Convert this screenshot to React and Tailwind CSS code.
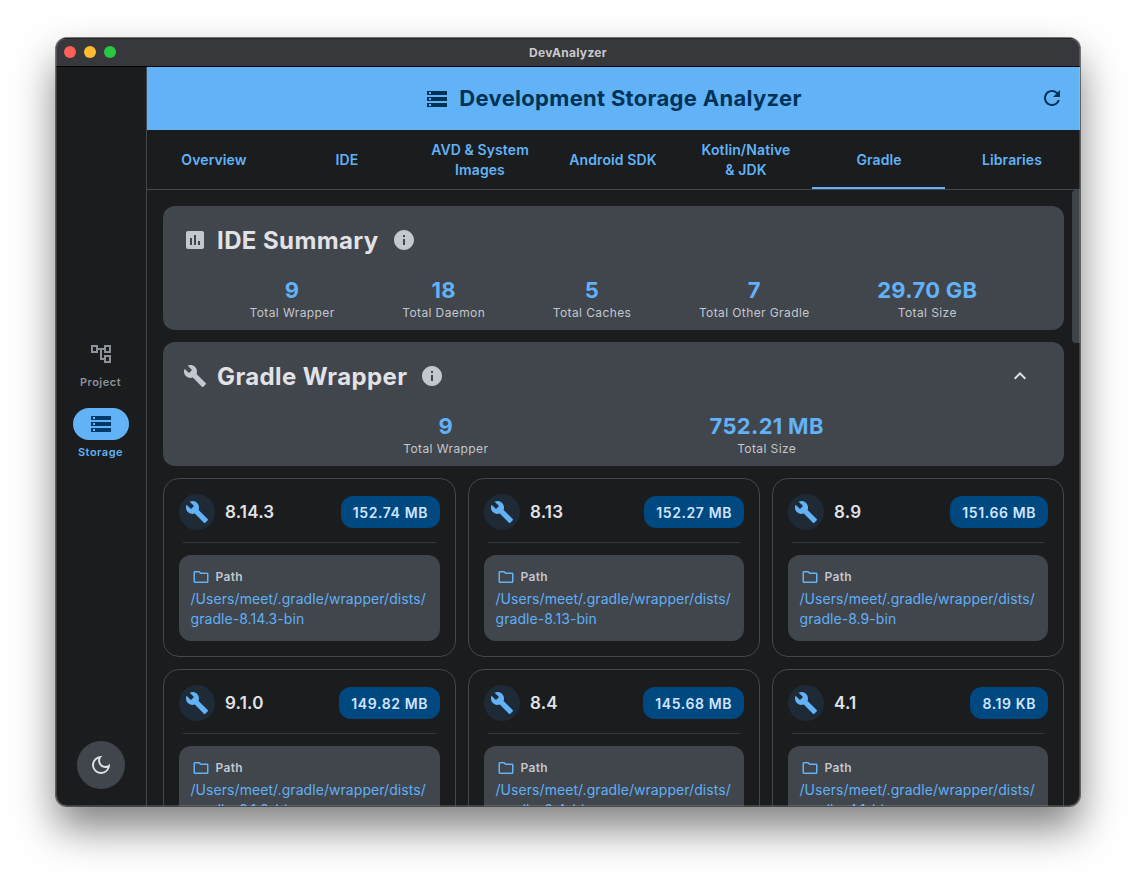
import React from "react";
import { MdStorage, MdRefresh, MdBuild, MdAssessment, MdInfo, MdOutlineFolder, MdOutlineDarkMode, MdKeyboardArrowUp, MdOutlineAccountTree } from "react-icons/md";

const tabs = ["Overview", "IDE", "AVD & System\nImages", "Android SDK", "Kotlin/Native\n& JDK", "Gradle", "Libraries"];
const cards = [
  ["8.14.3", "152.74 MB"],
  ["8.13", "152.27 MB"],
  ["8.9", "151.66 MB"],
  ["9.1.0", "149.82 MB"],
  ["8.4", "145.68 MB"],
  ["4.1", "8.19 KB"],
];

function Stat({ value, label }) {
  return (
    <div className="flex flex-col items-center">
      <div className="text-[22px] leading-[28px] font-bold tracking-[0.3px] text-[#61b2f6]">{value}</div>
      <div className="mt-[1px] text-[12px] leading-[16px] tracking-[0.4px] text-[#c3c7cf]">{label}</div>
    </div>
  );
}

function Section({ icon, title, stats, chevron }) {
  return (
    <section className="relative h-[124px] shrink-0 rounded-[12px] bg-[#41454c] px-4 pt-4">
      <div className="flex h-[36px] items-center">
        <div className="flex w-[38px] items-center pl-[4px] text-[#c3c7cf]">{icon}</div>
        <h2 className="pt-[2px] text-[24px] leading-[32px] font-bold tracking-[0.4px] text-[#e2e2e6]">{title}</h2>
        <MdInfo className="ml-[13px] text-[#c3c7cf]" size={24} />
        {chevron && <MdKeyboardArrowUp className="ml-auto mr-[16px] text-[#e2e2e6]" size={24} />}
      </div>
      <div className="mt-[18px] flex justify-evenly px-[3px]">
        {stats.map(([v, l]) => (
          <Stat key={l} value={v} label={l} />
        ))}
      </div>
    </section>
  );
}

function Card({ version, size }) {
  return (
    <article className="h-[179px] rounded-[16px] border border-[#43474e] bg-[#1a1c1e] px-[15px] pt-[15px]">
      <div className="flex h-[36px] items-center">
        <div className="flex h-[36px] w-[36px] items-center justify-center rounded-full bg-[#1e2a35] text-[#61b2f6]">
          <MdBuild size={24} />
        </div>
        <span className="ml-[10px] text-[17px] leading-[24px] font-semibold tracking-[0.2px] text-[#e2e2e6]">{version}</span>
        <span className="ml-auto flex h-[32px] items-center rounded-[12px] bg-[#004880] px-3 text-[14px] font-semibold tracking-[0.6px] text-[#d1e4ff]">
          {size}
        </span>
      </div>
      <div className="mx-[4px] mt-[12px] h-px bg-[#33363b]" />
      <div className="mt-[12px] h-[86px] rounded-[12px] bg-[#41454c] px-[11.5px] pt-[13px]">
        <div className="flex h-[18px] items-center gap-[6px] pl-[1px]">
          <MdOutlineFolder className="text-[#61b2f6]" size={18} />
          <span className="text-[12px] font-semibold tracking-[0.3px] text-[#c3c7cf]">Path</span>
        </div>
        <div className="mt-[3px] text-[14px] leading-[20px] tracking-[0.06px] text-[#5fb0f5]">
          /Users/meet/.gradle/wrapper/dists/
          <br />
          gradle-{version}-bin
        </div>
      </div>
    </article>
  );
}

export default function App() {
  return (
    <div className="h-[880px] w-[1136px] overflow-hidden bg-white pl-[56px] pt-[38px] font-['Inter',sans-serif] [font-optical-sizing:none]">
      <div className="relative h-[768px] w-[1024px] rounded-[11px] shadow-[0_0_0_1px_rgba(0,0,0,0.5),0_22px_42px_rgba(0,0,0,0.5)]">
        <div className="flex h-full w-full flex-col overflow-hidden rounded-[11px] bg-[#1a1c1e]">
          <div className="relative flex h-[29px] shrink-0 items-center justify-center border-y border-y-black bg-[#37383c]">
            <div className="absolute left-[8px] top-[7px] flex gap-[8px]">
              <span className="h-[12px] w-[12px] rounded-full bg-[#ff5f57]" />
              <span className="h-[12px] w-[12px] rounded-full bg-[#febc2e]" />
              <span className="h-[12px] w-[12px] rounded-full bg-[#28c840]" />
            </div>
            <span className="text-[12px] font-bold tracking-[0.3px] text-[#c9c9cb]">DevAnalyzer</span>
          </div>

          <div className="flex min-h-0 flex-1">
            <aside className="flex w-[91px] shrink-0 flex-col items-center border-r border-[#43474e] pr-[1px]">
              <div className="flex flex-1 flex-col items-center justify-center gap-[18px] pb-[2px]">
                <div className="flex flex-col items-center">
                  <div className="flex h-[32px] w-[56px] items-center justify-center text-[#8d9199]">
                    <MdOutlineAccountTree size={24} />
                  </div>
                  <span className="mt-[4px] text-[11px] leading-[16px] font-semibold tracking-[0.5px] text-[#8d9199]">Project</span>
                </div>
                <div className="flex flex-col items-center">
                  <div className="flex h-[32px] w-[56px] items-center justify-center rounded-full bg-[#61b2f6] text-[#003a6b]">
                    <MdStorage size={24} />
                  </div>
                  <span className="mt-[4px] text-[11px] leading-[16px] font-semibold tracking-[0.5px] text-[#61b2f6]">Storage</span>
                </div>
              </div>
              <div className="mb-[17px] mt-[8px] flex h-[48px] w-[48px] items-center justify-center rounded-full bg-[#41454c] text-[#e2e2e6]">
                <MdOutlineDarkMode size={24} />
              </div>
            </aside>

            <main className="flex min-w-0 flex-1 flex-col">
              <header className="relative flex h-[63px] shrink-0 items-center justify-center gap-[10px] bg-[#61b2f6] text-[#003258]">
                <MdStorage size={24} />
                <h1 className="text-[22px] font-bold tracking-[0.3px]">Development Storage Analyzer</h1>
                <MdRefresh className="absolute right-[16px] top-[19px]" size={24} />
              </header>

              <nav className="grid h-[60px] shrink-0 grid-cols-7 border-b border-[#43474e] pr-[2px]">
                {tabs.map((t) => (
                  <div key={t} className="relative flex items-center justify-center whitespace-pre-line pl-[1px] text-center text-[14px] leading-[20px] font-semibold tracking-[0.1px] text-[#61b2f6]">
                    {t}
                    {t === "Gradle" && <span className="absolute bottom-0 left-0 right-0 h-[2px] bg-[#61b2f6]" />}
                  </div>
                ))}
              </nav>

              <div className="relative min-h-0 flex-1 overflow-hidden">
                <div className="flex flex-col gap-[12px] px-[16px] pt-[16px]">
                  <Section
                    icon={<MdAssessment size={24} />}
                    title="IDE Summary"
                    stats={[["9", "Total Wrapper"], ["18", "Total Daemon"], ["5", "Total Caches"], ["7", "Total Other Gradle"], ["29.70 GB", "Total Size"]]}
                  />
                  <Section
                    icon={<MdBuild size={24} />}
                    title="Gradle Wrapper"
                    chevron
                    stats={[["9", "Total Wrapper"], ["752.21 MB", "Total Size"]]}
                  />
                  <div className="grid grid-cols-[293px_292px_292px] gap-[12px]">
                    {cards.map(([v, s]) => (
                      <Card key={v} version={v} size={s} />
                    ))}
                  </div>
                </div>
                <div className="absolute right-0 top-0 h-[153px] w-[8px] rounded-l-[4px] bg-[#404448]" />
              </div>
            </main>
          </div>
        </div>
        <div className="pointer-events-none absolute inset-0 rounded-[11px] border border-white/15" />
      </div>
    </div>
  );
}
